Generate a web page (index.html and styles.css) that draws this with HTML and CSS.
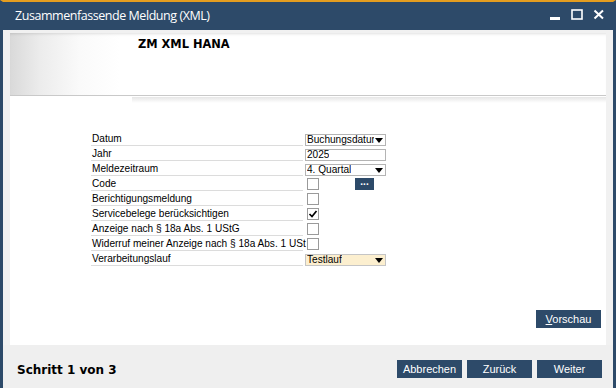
FILE: index.html
```html
<!DOCTYPE html>
<html lang="de">
<head>
<meta charset="utf-8">
<title>Zusammenfassende Meldung (XML)</title>
<link rel="stylesheet" href="styles.css">
</head>
<body>
<div class="window">
  <div class="titlebar">
    <span class="title">Zusammenfassende Meldung (XML)</span>
    <div class="controls">
      <svg class="ctl" width="12" height="12" viewBox="0 0 12 12"><rect x="1" y="8" width="10" height="3" fill="#fff"/></svg>
      <svg class="ctl" width="12" height="12" viewBox="0 0 12 12"><rect x="1" y="1" width="10" height="9" fill="none" stroke="#fff" stroke-width="1.6"/></svg>
      <svg class="ctl" width="12" height="12" viewBox="0 0 12 12"><path d="M1.5 1.5 L10 9.5 M10 1.5 L1.5 9.5" stroke="#fff" stroke-width="2"/></svg>
    </div>
  </div>
  <div class="frame">
    <div class="panel">
      <div class="header"><div class="header-title">ZM XML HANA</div></div>
      <div class="strip"></div>
      <div class="form">
        <div class="label">Datum</div>
        <div class="field select"><span>Buchungsdatum</span><i class="arrow"></i></div>
        <div></div>

        <div class="label">Jahr</div>
        <div class="field"><span>2025</span></div>
        <div></div>

        <div class="label">Meldezeitraum</div>
        <div class="field select"><span>4. Quartal</span><i class="arrow"></i></div>
        <div></div>

        <div class="label">Code</div>
        <div class="cbcell"><span class="cb"></span></div>
        <div class="dots">...</div>

        <div class="label">Berichtigungsmeldung</div>
        <div class="cbcell"><span class="cb"></span></div>
        <div></div>

        <div class="label">Servicebelege berücksichtigen</div>
        <div class="cbcell"><span class="cb"><svg width="10" height="10" viewBox="0 0 10 10"><path d="M1.5 5 L4 7.5 L8.5 2" fill="none" stroke="#000" stroke-width="1.7"/></svg></span></div>
        <div></div>

        <div class="label">Anzeige nach § 18a Abs. 1 UStG</div>
        <div class="cbcell"><span class="cb"></span></div>
        <div></div>

        <div class="label">Widerruf meiner Anzeige nach § 18a Abs. 1 USt</div>
        <div class="cbcell"><span class="cb"></span></div>
        <div></div>

        <div class="label">Verarbeitungslauf</div>
        <div class="field select highlight"><span>Testlauf</span><i class="arrow"></i></div>
        <div></div>
      </div>
      <div class="preview-row">
        <button class="btn"><u>V</u>orschau</button>
      </div>
    </div>
  </div>
  <div class="footer">
    <span class="step">Schritt 1 von 3</span>
    <div class="actions">
      <button class="btn">Abbrechen</button>
      <button class="btn">Zurück</button>
      <button class="btn">Weiter</button>
    </div>
  </div>
</div>
</body>
</html>
```

FILE: styles.css
```css
* { box-sizing: border-box; }
html, body { margin: 0; padding: 0; }
body {
  width: 616px;
  height: 388px;
  overflow: hidden;
  background: #2d4a69;
  font-family: "Liberation Sans", Arial, sans-serif;
}
.window {
  width: 616px;
  height: 388px;
  display: flex;
  flex-direction: column;
  border-top: 2px solid #e49d1f;
  border-left: 3px solid #2d4a69;
  border-right: 3px solid #2d4a69;
  background: #f0f0f0;
}
.titlebar {
  height: 28px;
  flex: none;
  background: #2d4a69;
  display: flex;
  align-items: center;
  justify-content: space-between;
  margin: 0 -3px;
  padding: 0 8px 0 15px;
}
.title {
  color: #fff;
  font-family: "Open Sans", "Noto Sans", sans-serif;
  font-size: 12.5px;
  letter-spacing: -0.45px;
  margin-top: -1px;
}
.controls {
  display: flex;
  gap: 10px;
  align-items: center;
  margin-top: -2px;
  margin-right: 3px;
}
.ctl { display: block; }
.frame {
  flex: 1;
  display: flex;
  padding: 3px 7px 0 7px;
  background: #f1f1f1;
}
.panel {
  flex: 1;
  background: #fff;
  display: flex;
  flex-direction: column;
  padding-bottom: 17px;
}
.header {
  height: 63px;
  border-bottom: 1px solid #c9c9c9;
  background: linear-gradient(to right, #d9d9d9 0px, #ececec 30px, #fafafa 70px, #fff 110px);
  box-shadow: inset 0 3px 3px -2px rgba(0,0,0,0.12);
  padding: 4px 0 0 128px;
}
.header-title {
  font-family: "DejaVu Sans", Verdana, sans-serif;
  font-weight: bold;
  font-size: 11.4px;
  color: #000;
}
.strip {
  height: 6px;
  margin: 1px 0 0 122px;
  background: linear-gradient(to bottom, #e6e6e6, #fff);
}
.form {
  margin: 28px 0 0 81px;
  display: grid;
  grid-template-columns: 214px 81px 40px;
  grid-auto-rows: 15px;
  font-size: 10.1px;
  color: #000;
}
.label {
  border-bottom: 1px solid #dcdcdc;
  line-height: 12px;
  padding: 2px 0 0 1px;
  margin-right: 2px;
  white-space: nowrap;
}
.field {
  align-self: end;
  height: 12px;
  border: 1px solid #b4b4b4;
  display: flex;
  align-items: center;
  justify-content: space-between;
  padding: 0 2px 0 1px;
  line-height: 10px;
  overflow: hidden;
  white-space: nowrap;
}
.field span { overflow: hidden; }
.highlight { background: #fcefcf; border-color: #c5c5c5; }
.arrow {
  flex: none;
  width: 0;
  height: 0;
  border-left: 4px solid transparent;
  border-right: 4px solid transparent;
  border-top: 5px solid #000;
  margin-left: 1px;
}
.cbcell {
  display: flex;
  align-items: flex-end;
  padding: 0 0 1px 2px;
}
.cb {
  width: 12px;
  height: 12px;
  border: 1px solid #9a9a9a;
  background: #fff;
  display: flex;
  align-items: center;
  justify-content: center;
}
.cb svg { display: block; }
.dots {
  align-self: end;
  margin: 0 0 1px -31px;
  width: 19px;
  height: 12px;
  background: #2d4a69;
  color: #fff;
  font-size: 10px;
  line-height: 8px;
  text-align: center;
  font-weight: bold;
}
.preview-row {
  margin-top: auto;
  display: flex;
  justify-content: flex-end;
  padding-right: 5px;
}
.btn {
  width: 65px;
  height: 18px;
  border: none;
  background: #2d4a69;
  color: #fff;
  font-family: "Liberation Sans", Arial, sans-serif;
  font-size: 11px;
  padding: 0;
  line-height: 18px;
}
.footer {
  flex: none;
  height: 43px;
  display: flex;
  align-items: flex-start;
  justify-content: space-between;
  padding: 15px 11px 0 14px;
  background: #efefef;
}
.step {
  font-family: "DejaVu Sans", Verdana, sans-serif;
  font-weight: bold;
  font-size: 12px;
  margin-top: 3px;
  color: #000;
}
.actions {
  display: flex;
  gap: 5px;
}
```
